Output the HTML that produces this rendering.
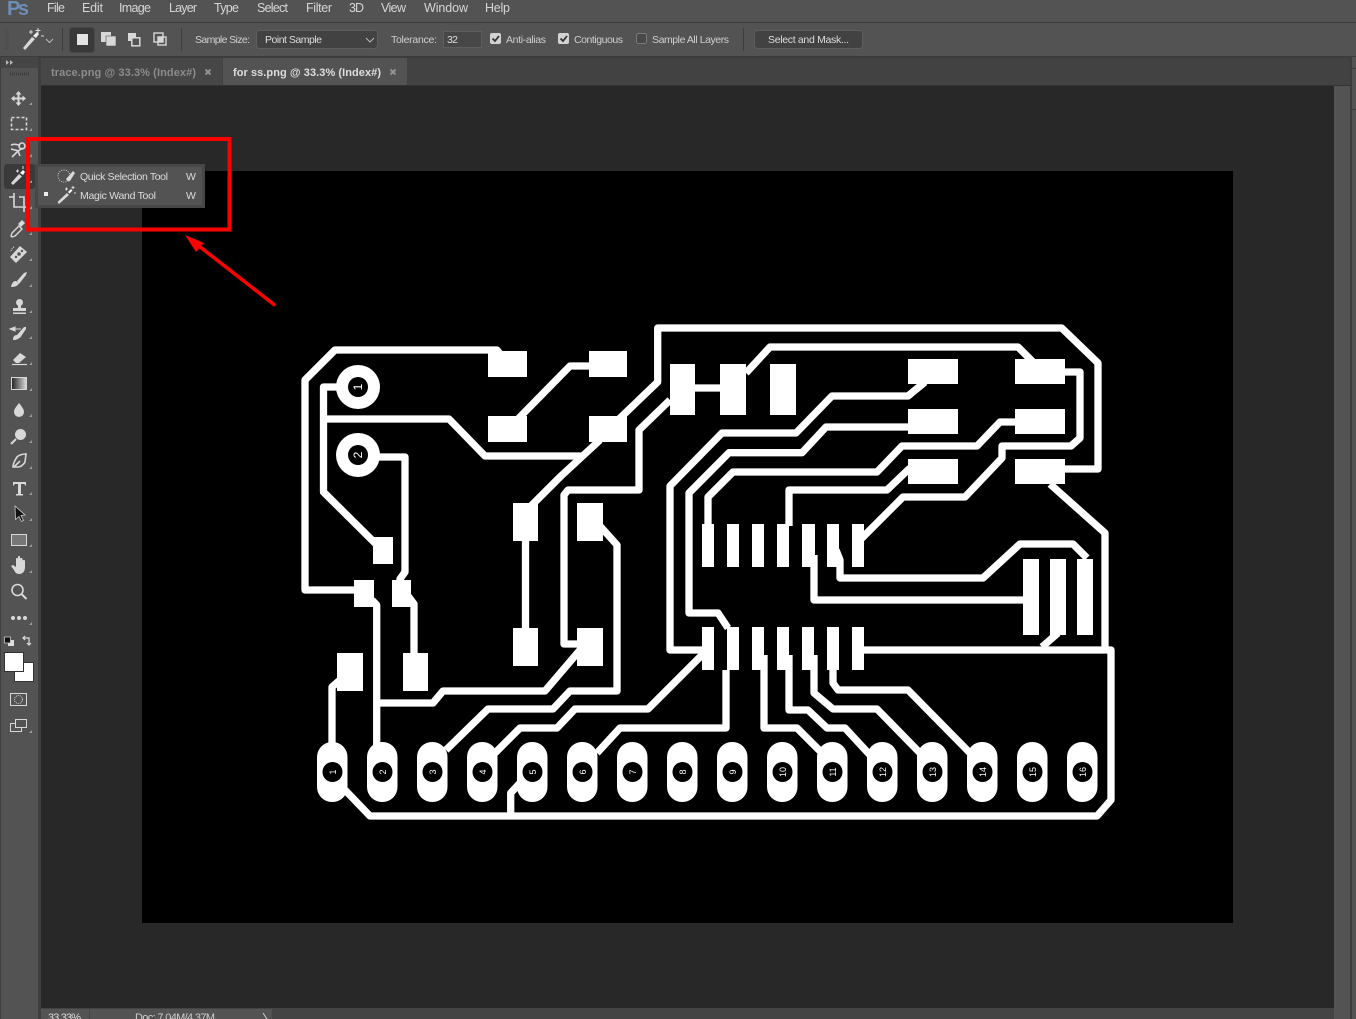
<!DOCTYPE html>
<html><head><meta charset="utf-8"><title>Photoshop</title>
<style>
html,body{margin:0;padding:0;background:#535353;overflow:hidden;width:1356px;height:1019px}
svg{display:block;position:absolute;left:0;top:0}
text{font-family:"Liberation Sans",sans-serif;font-size:11px;fill:#d4d4d4}
.m{font-size:12.5px;fill:#d6d6d6}
.o{font-size:10.5px;fill:#cfcfcf}
.t{fill:none;stroke:#fff;stroke-width:7.3;stroke-linejoin:round;stroke-linecap:butt}
.i{fill:#d8d8d8}
.s{fill:none;stroke:#d8d8d8;stroke-width:1.6}
.n{font-size:9px;fill:#fff;text-anchor:middle}
</style></head><body>
<svg width="1356" height="1019" viewBox="0 0 1356 1019" xmlns="http://www.w3.org/2000/svg">
<rect width="1356" height="1019" fill="#535353"/>
<!-- menu -->
<rect y="22" width="1356" height="1" fill="#3a3a3a"/>
<text x="7" y="15" style="font-size:20px;font-weight:bold;fill:#6d8fb5" textLength="22">Ps</text>
<text class="m" x="47" y="12" textLength="18">File</text>
<text class="m" x="82" y="12" textLength="21">Edit</text>
<text class="m" x="119" y="12" textLength="32">Image</text>
<text class="m" x="169" y="12" textLength="28">Layer</text>
<text class="m" x="214" y="12" textLength="25">Type</text>
<text class="m" x="257" y="12" textLength="31">Select</text>
<text class="m" x="306" y="12" textLength="26">Filter</text>
<text class="m" x="349" y="12" textLength="15">3D</text>
<text class="m" x="381" y="12" textLength="25">View</text>
<text class="m" x="424" y="12" textLength="44">Window</text>
<text class="m" x="485" y="12" textLength="25">Help</text>
<!-- options bar -->
<rect y="56" width="1356" height="1" fill="#3c3c3c"/>
<path d="M6 30v20M8 30v20" stroke="#444" stroke-dasharray="1 1" fill="none"/>
<g transform="translate(32,39)">
<path d="M-9 9 L-7 11 L3 0 L0 -2Z" class="i"/><path d="M1 -3 L5 -7 L7 -5 L4 -1Z" fill="#eee"/>
<path d="M-3 -7h4M-1 -9v4M6 -11v5M3.500 -8.500h5M9 -3h3" stroke="#ddd" stroke-width="1" fill="none"/>
</g>
<path d="M46 39l3.500 3.500 3.500-3.500" fill="none" stroke="#bbb"/>
<rect x="62" y="28" width="1" height="23" fill="#3d3d3d"/>
<rect x="69.500" y="27.500" width="25" height="25" rx="3" fill="#393939" stroke="#474747"/>
<rect x="77" y="34" width="11" height="11" fill="#e4e4e4"/>
<rect x="101" y="32" width="10" height="10" fill="#d8d8d8"/><rect x="106" y="36" width="10" height="10" fill="#d8d8d8" stroke="#535353" stroke-width=".6"/>
<rect x="128" y="33" width="8" height="8" fill="#d8d8d8"/><rect x="131.800" y="37.800" width="8" height="8" fill="#535353" stroke="#d8d8d8" stroke-width="1.500"/>
<rect x="154" y="33" width="9" height="9" fill="none" stroke="#d8d8d8" stroke-width="1.400"/><rect x="158" y="37" width="8" height="8" fill="none" stroke="#d8d8d8" stroke-width="1.400"/><rect x="158" y="37" width="5" height="5" fill="#d8d8d8"/>
<rect x="181" y="28" width="1" height="23" fill="#3d3d3d"/>
<text class="o" x="195" y="43" textLength="55">Sample Size:</text>
<rect x="256.500" y="30.500" width="121" height="18" rx="3" fill="#424242" stroke="#5e5e5e"/>
<text class="o" x="265" y="43" textLength="57" style="fill:#dcdcdc">Point Sample</text>
<path d="M366 38l4 4 4-4" fill="none" stroke="#bbb"/>
<text class="o" x="391" y="43" textLength="46">Tolerance:</text>
<rect x="443.500" y="31.500" width="38" height="16" fill="#474747" stroke="#5e5e5e"/>
<text class="o" x="447" y="43" textLength="11" style="fill:#dcdcdc">32</text>
<rect x="490" y="33" width="11" height="11" rx="2" fill="#d2d2d2"/><path d="M492.500 38.500l2.500 2.500 4-5" fill="none" stroke="#333" stroke-width="1.800"/>
<text class="o" x="506" y="43" textLength="40">Anti-alias</text>
<rect x="558" y="33" width="11" height="11" rx="2" fill="#d2d2d2"/><path d="M560.500 38.500l2.500 2.500 4-5" fill="none" stroke="#333" stroke-width="1.800"/>
<text class="o" x="574" y="43" textLength="49">Contiguous</text>
<rect x="636.500" y="33.500" width="10" height="10" rx="2" fill="#484848" stroke="#7a7a7a"/>
<text class="o" x="652" y="43" textLength="77">Sample All Layers</text>
<rect x="743" y="28" width="1" height="23" fill="#3d3d3d"/>
<rect x="754.500" y="30.500" width="108" height="18" rx="3" fill="#424242" stroke="#5e5e5e"/>
<text class="o" x="768" y="43" textLength="81" style="fill:#dcdcdc">Select and Mask...</text>
<!-- tab row -->
<rect x="41" y="57" width="1309" height="28" fill="#424242"/>
<rect x="41" y="57" width="1309" height="1" fill="#3c3c3c"/>
<rect x="41" y="58" width="181" height="27" fill="#474747"/>
<rect x="223" y="58" width="184" height="27" fill="#535353"/>
<text x="51" y="76" style="font-size:11px;fill:#8c8c8c;font-weight:bold" textLength="145">trace.png @ 33.3% (Index#)</text>
<path d="M205.500 69.500l5 5m0-5l-5 5" stroke="#999" stroke-width="1.800"/>
<text x="233" y="76" style="font-size:11px;fill:#dedede;font-weight:bold" textLength="148">for ss.png @ 33.3% (Index#)</text>
<path d="M390.500 69.500l5 5m0-5l-5 5" stroke="#999" stroke-width="1.800"/>
<rect x="41" y="85" width="1309" height="1" fill="#333"/>
<!-- canvas -->
<rect x="41" y="86" width="1293" height="922" fill="#282828"/>
<rect x="1334" y="86" width="16" height="923" fill="#535353"/>
<rect x="1350" y="57" width="2" height="962" fill="#3d3d3d"/>
<rect x="1352" y="68" width="4" height="1" fill="#3d3d3d"/><rect x="1352" y="109" width="4" height="1" fill="#3d3d3d"/>
<rect x="41" y="1008" width="1293" height="11" fill="#444"/>
<rect x="41" y="1009" width="231" height="10" fill="#535353"/>
<rect x="89" y="1009" width="1" height="10" fill="#444"/>
<text x="48" y="1021" style="font-size:11px;fill:#ddd" textLength="33">33.33%</text>
<text x="135" y="1021" style="font-size:11px;fill:#ccc" textLength="80">Doc: 7.04M/4.37M</text>
<path d="M263 1013l4 6" stroke="#ccc" fill="none"/>
<!-- document -->
<rect x="142" y="171" width="1091" height="752" fill="#000"/>
<!-- traces -->
<g class="t">
<polyline points="508,364 497,350 335,350 305,380 305,590 364,590"/>
<polyline points="589,366 570,366 517,420"/>
<polyline points="340,387 323.500,387 323.500,492 382,550"/>
<polyline points="323,419 449,419 485,456 582,456"/>
<polyline points="378,457 405,457 405,572 400,579 400,590"/>
<polyline points="600,440 561,476 530,507"/>
<polyline points="618,420 657.700,382 657.700,328 1061.700,328 1098,363 1098,469 1060,469"/>
<polyline points="695,388 725,388"/>
<polyline points="746,373 770,347 1018,347 1033,362"/>
<polyline points="670,400 639,430 639,490 568,490 564,495 564,644 580,644"/>
<polyline points="525.500,535 525.500,630"/>
<polyline points="600,526 617,545 617,691 570,691 553,709 488,709 446,750"/>
<polyline points="580,650 545,691 443,691 433,703 378,703"/>
<polyline points="372,600 376.700,605 376.700,745"/>
<polyline points="340,680 332,687 332,745"/>
<polyline points="408,596 414,604 414,655"/>
<polyline points="495,753 520,728 557,728 575,709 648,709 705,652"/>
<polyline points="597,753 620,728 726,728 726,670"/>
<polyline points="705,650 670,650 670,486 722,433 796,433 832,396 908,396 925,382"/>
<polyline points="728,628 718,613 689,613 689,493 729,452.700 802,452.700 826,427 910,427"/>
<polyline points="708,526 708,497 733,472 877,472 902,446 977,446 1000,422 1017,422"/>
<polyline points="789,526 789,490 887,490 910,468"/>
<polyline points="860,540 903,497 965,497 1002,458 1002,446 1071,446 1080,438 1080,372 1062,372"/>
<polyline points="1050,484 1105,533 1105,650"/>
<polyline points="860,650 1111,650 1111,800 1097,816 370,816 345,790"/>
<polyline points="510.700,816 510.700,793 520,783"/>
<polyline points="1042,647 1058,633"/>
<polyline points="814,555 814,600 1025,600"/>
<polyline points="836,550 840,560 840,578 983,578 1020,544 1073,544 1087,558"/>
<polyline points="764,655 764,728 797,728 822,753"/>
<polyline points="789,655 789,710 808,710 827,728 845,728 870,755"/>
<polyline points="814,655 814,693 833,709 877,709 920,753"/>
<polyline points="833,668 833,683 838,690 908,690 972,755"/>
</g>
<!-- pads -->
<g fill="#fff">
<rect x="488" y="351" width="39" height="26"/><rect x="589" y="351" width="38" height="26"/>
<rect x="488" y="416" width="39" height="26"/><rect x="589" y="416" width="38" height="26"/>
<rect x="373" y="537" width="20" height="27"/><rect x="392" y="580" width="19" height="27"/><rect x="354" y="580" width="20" height="27"/>
<rect x="513" y="503" width="25" height="38"/><rect x="577" y="503" width="26" height="38"/>
<rect x="513" y="628" width="25" height="38"/><rect x="577" y="628" width="26" height="38"/>
<rect x="337" y="653" width="26" height="38"/><rect x="403" y="653" width="25" height="38"/>
<rect x="670" y="364" width="25" height="51"/><rect x="720" y="364" width="26" height="51"/><rect x="770" y="364" width="26" height="51"/>
<rect x="908" y="359" width="50" height="25"/><rect x="908" y="409" width="50" height="25"/><rect x="908" y="459" width="50" height="25"/>
<rect x="1015" y="359" width="50" height="25"/><rect x="1015" y="409" width="50" height="25"/><rect x="1015" y="459" width="50" height="25"/>
<rect x="702" y="524" width="12" height="43"/><rect x="727" y="524" width="12" height="43"/><rect x="752" y="524" width="12" height="43"/><rect x="777" y="524" width="12" height="43"/><rect x="802" y="524" width="13" height="43"/><rect x="827" y="524" width="12" height="43"/><rect x="852" y="524" width="12" height="43"/>
<rect x="702" y="627" width="12" height="43"/><rect x="727" y="627" width="12" height="43"/><rect x="752" y="627" width="12" height="43"/><rect x="777" y="627" width="12" height="43"/><rect x="802" y="627" width="12" height="43"/><rect x="827" y="627" width="12" height="43"/><rect x="852" y="627" width="12" height="43"/>
<rect x="1023" y="559" width="16" height="76"/><rect x="1050" y="559" width="16" height="76"/><rect x="1077" y="559" width="16" height="76"/>
<circle cx="358" cy="387" r="22"/><circle cx="358" cy="455" r="22"/>
<rect x="317" y="742" width="30.500" height="60" rx="15"/><rect x="367" y="742" width="30.500" height="60" rx="15"/><rect x="417" y="742" width="30.500" height="60" rx="15"/><rect x="467" y="742" width="30.500" height="60" rx="15"/><rect x="517" y="742" width="30.500" height="60" rx="15"/><rect x="567" y="742" width="30.500" height="60" rx="15"/><rect x="617" y="742" width="30.500" height="60" rx="15"/><rect x="667" y="742" width="30.500" height="60" rx="15"/><rect x="717" y="742" width="30.500" height="60" rx="15"/><rect x="767" y="742" width="30.500" height="60" rx="15"/><rect x="817" y="742" width="30.500" height="60" rx="15"/><rect x="867" y="742" width="30.500" height="60" rx="15"/><rect x="917" y="742" width="30.500" height="60" rx="15"/><rect x="967" y="742" width="30.500" height="60" rx="15"/><rect x="1017" y="742" width="30.500" height="60" rx="15"/><rect x="1067" y="742" width="30.500" height="60" rx="15"/>
</g>
<g fill="#000">
<circle cx="358" cy="387" r="10"/><circle cx="358" cy="455" r="10"/>
<circle cx="332.500" cy="772" r="10"/><circle cx="382.500" cy="772" r="10"/><circle cx="432.500" cy="772" r="10"/><circle cx="482.500" cy="772" r="10"/><circle cx="532.500" cy="772" r="10"/><circle cx="582.500" cy="772" r="10"/><circle cx="632.500" cy="772" r="10"/><circle cx="682.500" cy="772" r="10"/><circle cx="732.500" cy="772" r="10"/><circle cx="782.500" cy="772" r="10"/><circle cx="832.500" cy="772" r="10"/><circle cx="882.500" cy="772" r="10"/><circle cx="932.500" cy="772" r="10"/><circle cx="982.500" cy="772" r="10"/><circle cx="1032.500" cy="772" r="10"/><circle cx="1082.500" cy="772" r="10"/>
</g>
<text class="n" style="font-size:12px" transform="translate(362,387) rotate(-90)">1</text>
<text class="n" style="font-size:12px" transform="translate(362,455) rotate(-90)">2</text>
<text class="n" transform="translate(336,772) rotate(-90)">1</text>
<text class="n" transform="translate(386,772) rotate(-90)">2</text>
<text class="n" transform="translate(436,772) rotate(-90)">3</text>
<text class="n" transform="translate(486,772) rotate(-90)">4</text>
<text class="n" transform="translate(536,772) rotate(-90)">5</text>
<text class="n" transform="translate(586,772) rotate(-90)">6</text>
<text class="n" transform="translate(636,772) rotate(-90)">7</text>
<text class="n" transform="translate(686,772) rotate(-90)">8</text>
<text class="n" transform="translate(736,772) rotate(-90)">9</text>
<text class="n" transform="translate(786,772) rotate(-90)">10</text>
<text class="n" transform="translate(836,772) rotate(-90)">11</text>
<text class="n" transform="translate(886,772) rotate(-90)">12</text>
<text class="n" transform="translate(936,772) rotate(-90)">13</text>
<text class="n" transform="translate(986,772) rotate(-90)">14</text>
<text class="n" transform="translate(1036,772) rotate(-90)">15</text>
<text class="n" transform="translate(1086,772) rotate(-90)">16</text>
<!-- toolbar -->
<rect x="0" y="57" width="1" height="962" fill="#3f3f3f"/>
<rect x="38" y="57" width="3" height="962" fill="#3f3f3f"/>
<rect x="1" y="57" width="37" height="11" fill="#454545"/>
<path d="M6 60l3 2.500-3 2.500zM10 60l3 2.500-3 2.500z" fill="#bbb"/>
<path d="M10 74h19" stroke="#3c3c3c" stroke-width="3" stroke-dasharray="1 1"/>
<rect x="4" y="164" width="31" height="25" rx="3" fill="#3a3a3a"/>
<g class="i">
<!-- corner triangles -->
<path d="M32 102v3h-3zM32 128v3h-3zM32 154v3h-3zM32 180v3h-3zM32 206v3h-3zM32 232v3h-3zM32 258v3h-3zM32 284v3h-3zM32 310v3h-3zM32 336v3h-3zM32 362v3h-3zM32 388v3h-3zM32 414v3h-3zM32 440v3h-3zM32 466v3h-3zM32 492v3h-3zM32 518v3h-3zM32 544v3h-3zM32 570v3h-3zM32 622v3h-3zM32 730v3h-3z" fill="#999"/>
<!-- move -->
<path d="M18.500 91l3 3.500h-2v3h3v-2l3.500 3-3.500 3v-2h-3v3h2l-3 3.500-3-3.500h2v-3h-3v2l-3.500-3 3.500-3v2h3v-3h-2z"/>
<!-- wand -->
<path d="M13 185l-2-2 8-9 3 2.500z"/><path d="M20 173l3-3 2 2-2 3z" fill="#fff"/>
<path d="M16 171h3M17.500 169.500v3M23 166v3" stroke="#ddd" stroke-width="1" fill="none"/>
<!-- eyedropper -->
<path d="M12 237l-1-1 1-3 7-7 3 3-7 7z" fill="#535353" stroke="#d8d8d8" stroke-width="1.400"/><path d="M18 224l4-4 3 3-4 4z"/>
<!-- healing -->
<path d="M10 257l10-11 7 6-11 11z"/>
<circle cx="19" cy="254" r="1.800" fill="#535353"/><circle cx="16" cy="257" r="1.200" fill="#535353"/><circle cx="22" cy="251" r="1.200" fill="#535353"/>
<path d="M14 247c-2 1-3 3-3 5" fill="none" stroke="#d8d8d8" stroke-dasharray="1 1"/>
<!-- brush -->
<path d="M17 281l7-8 3-1-1 3-7 9z"/><path d="M11 287c1-5 3-6 5-6l3 2c-1 3-4 4-8 4z"/>
<!-- stamp -->
<circle cx="19.500" cy="302.500" r="3.500"/><path d="M18 305h3v3h5v3H13v-3h5z"/><rect x="13" y="312.500" width="13" height="1.500"/>
<!-- history -->
<path d="M17 335l7-8 2 0 0 2-6 9z"/><path d="M13 340c0-4 2-5 4-5l3 2c-1 2-4 3-7 3z"/><path d="M10 329l5-2v4zM15 329h6" stroke="#d8d8d8"/>
<!-- eraser -->
<path d="M13 360l7-7 6 4-7 6h-3z"/><path d="M12 364.500h15" stroke="#d8d8d8" stroke-width="1.200"/>
<!-- blur -->
<path d="M19 403c3 4 5 6 5 9a5 5 0 0 1-10 0c0-3 2-5 5-9z"/>
<!-- dodge -->
<circle cx="20.500" cy="434.500" r="5.500"/><path d="M16 439l-5 5" stroke="#d8d8d8" stroke-width="2"/>
<!-- T -->
<path d="M13 482h13v3.500h-1l-.5-1.500h-3.500v10h2v1.500h-7V494h2v-10h-3.500l-.5 1.500h-1z"/>
<!-- path select -->
<path d="M15 506l10 9-4 .5 2.500 5-2 1-2.500-5-3.500 3z" fill="#111" stroke="#ccc" stroke-width=".8"/>
<!-- hand -->
<path d="M11 566l2-1 3 2 0-8c0-1.500 2-1.500 2 0v-2c0-1.500 2-1.500 2 0v2c0-1.500 2.500-1.500 2.500 0v2c0-1.500 2.500-1.500 2.500 0v6c0 4-2 7-6 7-3 0-4-2-5-4z"/>
<!-- dots -->
<circle cx="13" cy="618" r="2"/><circle cx="19" cy="618" r="2"/><circle cx="25" cy="618" r="2"/>
</g>
<g class="s">
<rect x="11.500" y="117.500" width="15" height="12" stroke-dasharray="3 2"/>
<path d="M11 145c3-1 7-1 9 1M11 149l8 2M12 157l6-6 2 5M18 151l5-3"/>
<circle cx="22" cy="146" r="3"/>
<path d="M9 197h5v10h10v5M14 193v4M19 197h5v9M24 207h4"/>
<path d="M17 457c2-2 5-3 9-3l-1 8c-1 2-4 5-7 5h-5c0-3 2-7 4-10zM14 467l6-6"/>
<circle cx="17.500" cy="590" r="5.500"/><path d="M21.500 594l5 5" stroke-width="2"/>
</g>
<defs><linearGradient id="g"><stop offset="0" stop-color="#222"/><stop offset="1" stop-color="#ddd"/></linearGradient></defs>
<rect x="11.500" y="377.500" width="15" height="12" fill="url(#g)" stroke="#d8d8d8"/>
<rect x="11.500" y="534.500" width="15" height="11" fill="#777" stroke="#d8d8d8"/>
<!-- colour chips -->
<rect x="8" y="640" width="6" height="6" fill="#ddd"/><rect x="4.500" y="637" width="6" height="6" fill="#111" stroke="#ddd" stroke-width=".7"/>
<path d="M23 638h6v6M27 643l2 2 2-2M25 636l-2 2 2 2" fill="none" stroke="#ddd" stroke-width="1.200"/>
<rect x="14.500" y="662.500" width="19" height="19" fill="#fff" stroke="#333"/>
<rect x="4.500" y="652.500" width="19" height="19" fill="#fff" stroke="#333"/>
<rect x="10.500" y="693.500" width="16" height="12" fill="none" stroke="#d8d8d8"/><circle cx="18.500" cy="699.500" r="4" fill="none" stroke="#d8d8d8" stroke-dasharray="1 1"/>
<rect x="10.500" y="723.500" width="11" height="8" fill="none" stroke="#d8d8d8"/><rect x="15.500" y="719.500" width="11" height="8" fill="#535353" stroke="#d8d8d8"/>
<!-- flyout -->
<rect x="35" y="164" width="170" height="44" fill="#474747"/>
<rect x="38" y="167" width="164" height="38" fill="#535353"/>
<circle cx="64" cy="176" r="6" fill="none" stroke="#ccc" stroke-dasharray="1 1.300"/>
<path d="M66 179l7-8 2 2-5 8c-2 1-3 0-4-2z" fill="#d8d8d8"/>
<text x="80" y="180" style="font-size:10.500px;fill:#dcdcdc" textLength="88">Quick Selection Tool</text>
<text x="186" y="180" style="font-size:10.500px;fill:#dcdcdc" textLength="9">W</text>
<rect x="44" y="192" width="4" height="4" fill="#eee"/>
<path d="M59 204l-1.500-2 9.500-9 2 2z" fill="#d8d8d8"/><path d="M68 192l3-3 1.500 1.500-3 3z" fill="#fff"/>
<path d="M65 189h3M66.500 187.500v3M73 186v3M71.500 187.500h3M74 193h2" stroke="#ddd" fill="none"/>
<text x="80" y="199" style="font-size:10.500px;fill:#dcdcdc" textLength="76">Magic Wand Tool</text>
<text x="186" y="199" style="font-size:10.500px;fill:#dcdcdc" textLength="9">W</text>
<!-- annotations -->
<rect x="28" y="139" width="201.500" height="90.500" fill="none" stroke="#f00" stroke-width="4"/>
<path d="M274 304.500L197 244.500" stroke="#f00" stroke-width="3.500" stroke-linecap="round" fill="none"/>
<path d="M185 235L204 243L196 252Z" fill="#f00"/>
</svg>
</body></html>
